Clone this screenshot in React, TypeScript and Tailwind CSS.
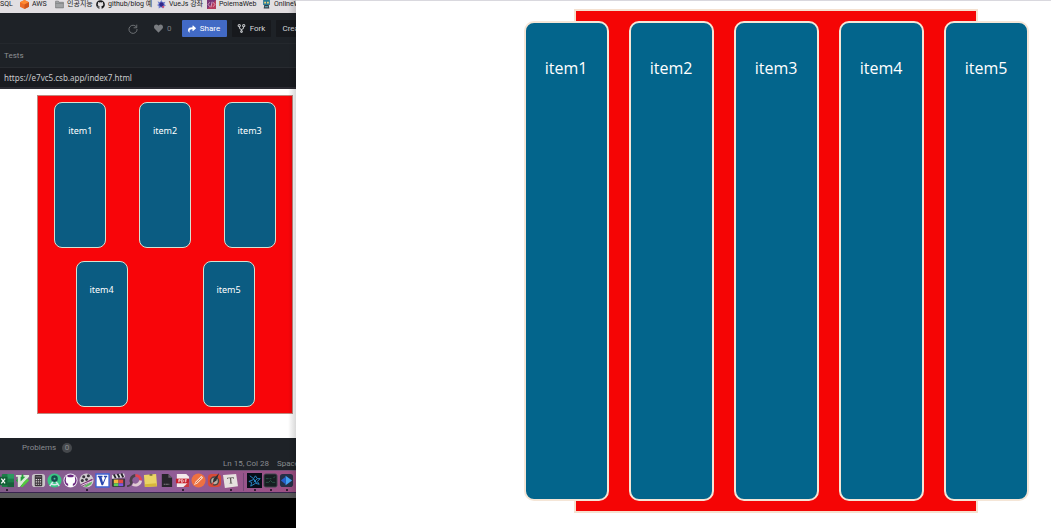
import React from 'react';
import { FaGithub, FaHeart, FaShare } from 'react-icons/fa';

type IconProps = { children: React.ReactNode };

const Icon = ({ children }: IconProps) => (
  <svg viewBox="0 0 16 16" className="size-[15px] shrink-0" aria-hidden="true">
    {children}
  </svg>
);

const Cube = () => (
  <svg viewBox="0 0 16 16" className="size-[9px]">
    <path d="M8 0l8 4v8l-8 4-8-4V4z" fill="#ed6d27" />
    <path d="M8 0l8 4-8 4-8-4z" fill="#ff8a32" />
    <path d="M8 8v8l8-4V4z" fill="#cf551b" />
  </svg>
);

const Folder = () => (
  <svg viewBox="0 0 16 16" className="size-[9px]">
    <path d="M1 3V2h5l1 2h8v10H1z" fill="#a1a3a5" stroke="#68696b" />
    <path d="M1 6h14" stroke="#737577" />
  </svg>
);

const Splash = () => (
  <svg viewBox="0 0 16 16" className="size-[9px]">
    <path d="M1 2l4 2 3-4 2 4 5-1-2 4 3 3-4 1-1 4-4-2-4 2V11L0 9l3-2z" fill="#7181ce" />
    <circle cx="8" cy="8" r="4" fill="#30288a" />
    <circle cx="11" cy="12" r="2" fill="#d04d73" />
  </svg>
);

const CodeTile = () => (
  <svg viewBox="0 0 16 16" className="size-[9px]">
    <path d="M0 0h16v16H0z" fill="#783678" />
    <path d="M0 16L16 0v16z" fill="#b63d5e" />
    <path d="M5 4L2 8l3 4M11 4l3 4-3 4M9 3l-2 10" fill="none" stroke="#e9b5cf" strokeWidth="1.4" />
  </svg>
);

const Robot = () => (
  <svg viewBox="0 0 16 16" className="size-[9px]">
    <path d="M2 0h12v9H2z" fill="#287a96" />
    <path d="M4 3h3v3H4zM9 3h3v3H9z" fill="#f5d778" />
    <path d="M4 9h8l1 6H3z" fill="#373d48" />
    <path d="M5 11h6v2H5z" fill="#62b5c3" />
  </svg>
);

const ForkIcon = () => (
  <svg viewBox="0 0 16 16" className="size-[9px]" fill="none" stroke="#c9cbce" strokeWidth="1.800">
    <path d="M4 5q0 4 4 5 4-1 4-5M8 10v2" />
    <circle cx="4" cy="3" r="2" />
    <circle cx="12" cy="3" r="2" />
    <circle cx="8" cy="13.500" r="1.500" />
  </svg>
);

const bookmarks = [
  { label: 'AWS', width: 'w-[35px]', icon: <Cube /> },
  { label: '인공지능', width: 'w-[41px]', icon: <Folder /> },
  { label: 'github/blog 예', width: 'w-[61px]', icon: <FaGithub className="size-[9px]" /> },
  { label: 'VueJs 강좌', width: 'w-[50px]', icon: <Splash /> },
  { label: 'PoiemaWeb', width: 'w-[55px]', icon: <CodeTile /> },
  { label: 'OnlineWeb', width: 'w-[55px]', icon: <Robot /> },
];

const dockApps = [
  {
    name: 'Spreadsheet',
    running: true,
    art: (
      <>
        <rect x="3" y="1" width="13" height="14" rx="1" fill="#1c7d48" />
        <path d="M9 1h7v5H9z" fill="#2d9a60" />
        <path d="M9 10h7v5H9z" fill="#17603a" />
        <rect y="4" width="9" height="9" fill="#126137" />
        <path d="M2.500 6l4 5M6.500 6l-4 5" stroke="#fff" strokeWidth="1.300" />
      </>
    ),
  },
  {
    name: 'Vim',
    art: (
      <>
        <path d="M8 1l7 7-7 7-7-7z" fill="#249c3c" />
        <path d="M1 2h6v2H6v5l5-5H9V2h6v2L5 15H3V4H1z" fill="#d9e8d5" />
        <path d="M9 10l4-4 2 2-7 7H6z" fill="#56c93f" />
      </>
    ),
  },
  {
    name: 'Calculator',
    art: (
      <>
        <rect x="1" y="1" width="14" height="14" rx="3" fill="#c9c4c8" />
        <rect x="4" y="2" width="8" height="12" rx="1" fill="#3a3338" />
        <path d="M5 4h6" stroke="#6e676c" strokeWidth="1.500" />
        <path d="M5 7h6M5 9.500h6M5 12h6" stroke="#d6cfd2" strokeWidth="1.300" strokeDasharray="1.400 0.800" />
      </>
    ),
  },
  {
    name: 'Android tools',
    art: (
      <>
        <circle cx="8" cy="8" r="7.500" fill="#39c783" />
        <path d="M8 7l-5 7M8 7l5 7M4 11q4 3 8 0" fill="none" stroke="#d8e9ec" strokeWidth="1.500" />
        <circle cx="8" cy="6" r="3.500" fill="#164e4c" />
        <circle cx="8" cy="6" r="1" fill="#5abfa6" />
      </>
    ),
  },
  {
    name: 'GitHub',
    art: (
      <>
        <circle cx="8" cy="8" r="7.500" fill="#efe6f2" />
        <circle cx="8" cy="8" r="6.500" fill="#6b2780" />
        <path d="M3.500 3l2.500 1.500h4L12.500 3l.5 5q0 3-2.500 3.500V15h-5v-3.500Q3 11 3 8z" fill="#fff" />
      </>
    ),
  },
  {
    name: 'Media viewer',
    running: true,
    art: (
      <>
        <circle cx="8" cy="8" r="7.500" fill="#d0cbd0" />
        <circle cx="5" cy="4" r="1.600" fill="#37343c" />
        <circle cx="10" cy="3" r="1.600" fill="#37343c" />
        <circle cx="3.500" cy="8" r="1.600" fill="#37343c" />
        <circle cx="8" cy="7" r="1.500" fill="#37343c" />
        <path d="M2 12l12-6 1 2L4 14z" fill="#7c3077" />
        <path d="M5 14l9-5-1 3-5 3z" fill="#5eb55e" />
        <path d="M3 13l12-5" stroke="#f1e6f0" />
      </>
    ),
  },
  {
    name: 'Vector editor',
    art: (
      <>
        <path d="M1 1h14v14H1z" fill="#fff" stroke="#3d62d3" strokeWidth="1.500" />
        <path d="M3 3h5v1.500H7L8.500 10 11 4.500H9.500V3H13v1.500h-1L8.500 13H7L4 4.500H3z" fill="#2846ad" />
      </>
    ),
  },
  {
    name: 'Video editor',
    art: (
      <>
        <path d="M1 6h14v7q0 2-2 2H3q-2 0-2-2z" fill="#35383f" />
        <path d="M1 2l13-1.500 1 4L1 6z" fill="#e2dfe3" />
        <path d="M3 1.500l2 4M7 1l2 4M11 .5l2 4" stroke="#242329" strokeWidth="2" />
        <path d="M3 7h5v4H3z" fill="#f4b83f" />
        <path d="M8 7h5v4H8z" fill="#df4a48" />
        <path d="M3 11h5v3H3z" fill="#5dd056" />
        <path d="M8 11h5v3H8z" fill="#7f54e0" />
      </>
    ),
  },
  {
    name: 'Disk cleaner',
    art: (
      <>
        <path d="M5 11A5.500 5.500 0 0 1 9 2.500" fill="none" stroke="#4b4149" strokeWidth="3" />
        <path d="M9 2.500a5.500 5.500 0 0 1 5.500 5.500" fill="none" stroke="#e44550" strokeWidth="3" />
        <path d="M14.500 8A5.500 5.500 0 0 1 6 12" fill="none" stroke="#e1cbd4" strokeWidth="3" />
        <path d="M0 14q4 0 5-4" fill="none" stroke="#4b4149" strokeWidth="2" />
      </>
    ),
  },
  {
    name: 'Notes',
    art: (
      <>
        <path d="M1 2l13-1 1 13-13 1z" fill="#ead465" />
        <path d="M2 12l12-1 1 3-13 1z" fill="#d6b73b" />
        <path d="M7 1h3v2H7z" fill="#7a7044" />
      </>
    ),
  },
  {
    name: 'Document',
    art: (
      <>
        <path d="M3 1h7l4 4v10H3z" fill="#27262b" />
        <path d="M10 1v4h4z" fill="#67606a" />
        <path d="M5 12h6" stroke="#88838a" strokeDasharray="2 .5" />
      </>
    ),
  },
  {
    name: 'Document reader',
    running: true,
    art: (
      <>
        <path d="M2 1h10l3 3v11H2z" fill="#f3e9ea" />
        <path d="M1 6h14v5H1z" fill="#c61e2c" />
        <path d="M4 10V7h1.500v1.500H4M7 10V7q2 0 2 1.500T7 10M11 10V7h1.500M11 8.500h1.500" fill="none" stroke="#fff" strokeWidth=".7" />
        <path d="M9 15l6-6v6z" fill="#cb3740" />
      </>
    ),
  },
  {
    name: 'API client',
    art: (
      <>
        <circle cx="8" cy="8" r="7.500" fill="#ee7141" />
        <path d="M3 13l2-4 6-6 2 2-6 6z" fill="#f9d8c7" />
        <path d="M5 11l6-6" fill="none" stroke="#d8673b" />
      </>
    ),
  },
  {
    name: 'Compass',
    art: (
      <>
        <rect x="1" y="1" width="14" height="14" rx="4" fill="#d84a36" />
        <circle cx="8" cy="8.500" r="5" fill="#4a4545" />
        <circle cx="8" cy="8.500" r="3.500" fill="#b9b0a4" />
        <path d="M6 11l1-5 6-6-3 8z" fill="#2e2e32" />
        <path d="M4 12l4-3-2 4z" fill="#d94136" />
      </>
    ),
  },
  {
    name: 'Text editor',
    running: true,
    art: (
      <>
        <path d="M0 2l14-1 2 13-14 2z" fill="#e6e1df" />
        <path d="M4.500 5l7-.5.2 1.500h-.8l-.2-.6-2 .1.400 5 .8.200v.5H7v-.5l.8-.2-.4-5-2 .2-.1.800h-.8z" fill="#57534f" />
      </>
    ),
  },
  {
    name: 'Network map',
    running: true,
    divided: true,
    art: (
      <>
        <path d="M0 0h16v16H0z" fill="#070d18" />
        <path d="M3 3l4 3 2-3 2 3h3l-3 3 2 3-4-1-5 3 1-4-3-1 5-2 3 3M7 6l3 5M11 6l-4 4" fill="none" stroke="#2a89c7" />
      </>
    ),
  },
  {
    name: 'System monitor',
    running: true,
    art: (
      <>
        <rect x="1" y="1" width="14" height="14" rx="2" fill="#161e21" stroke="#4a4d55" />
        <path d="M3 6h3M7 6h2M11 5l2-1M3 10h3l2-2 2 2h3" fill="none" stroke="#2b5546" />
      </>
    ),
  },
  {
    name: 'Player',
    running: true,
    art: (
      <>
        <rect x="1" y="1" width="14" height="14" rx="3" fill="#263047" />
        <path d="M7 3l7 5-7 5z" fill="#43a0f4" />
        <path d="M7 4v8L2 8z" fill="#2560d0" />
      </>
    ),
  },
];

const SmallItem = ({ label }: { label: string }) => (
  <div className="h-[146px] w-[52px] rounded-[8px] border border-[#d8e0d0] bg-[#0b5c82] pt-[21px] text-center text-[9px] leading-[14px] text-white">
    {label}
  </div>
);

function EditorWindow() {
  return (
    <section className="relative flex w-[296px] shrink-0 flex-col overflow-hidden bg-black font-['Roboto','Noto_Sans_CJK_KR',sans-serif]">
      <nav className="flex h-[13px] items-start overflow-hidden bg-[#e2dfe2] text-[7px] leading-[9px] whitespace-nowrap text-[#19191b]">
        <a href="#sql" className="w-5 shrink-0">SQL</a>
        {bookmarks.map((b) => (
          <a key={b.label} href="#bookmark" className={`flex shrink-0 items-center gap-[3px] ${b.width}`}>
            <span className="shrink-0">{b.icon}</span>
            {b.label}
          </a>
        ))}
      </nav>

      <header className="flex h-[31px] items-center border-b border-[#24282d] bg-[#1e2227] pt-px pl-[128px] text-[8px] whitespace-nowrap text-[#d5d7da]">
        <button aria-label="Refresh" className="mr-4 shrink-0">
          <svg viewBox="0 0 16 16" className="size-[10px]" fill="none" stroke="#777a7e" strokeWidth="1.4">
            <path d="M13.500 5A6.500 6.500 0 1 0 14.500 8M14 1v5H9" />
          </svg>
        </button>
        <button className="mr-[10px] flex shrink-0 items-center gap-1 text-[#797c80]">
          <FaHeart className="size-[9px]" />0
        </button>
        <button className="mr-[5px] flex h-[17px] w-[45px] shrink-0 items-center justify-center gap-1 rounded-[1px] bg-[#426ac5] text-white">
          <FaShare className="size-[8px]" />Share
        </button>
        <button className="mr-[5px] flex h-[17px] w-[39px] shrink-0 items-center justify-center gap-1 rounded-[1px] bg-[#17191d]">
          <ForkIcon />Fork
        </button>
        <button className="h-[17px] w-[45px] shrink-0 rounded-[1px] bg-[#17191d] pl-[7px] text-left">Create</button>
      </header>

      <div className="h-[24px] border-b border-[#282b30] bg-[#1e2227] pl-1 text-[8px] leading-[23px] text-[#8e9194]">Tests</div>
      <div className="h-[21px] border-b-2 border-[#2b2b32] bg-[#191b20] px-1">
        <input
          aria-label="Address"
          defaultValue="https://e7vc5.csb.app/index7.html"
          className="block h-[19px] w-full bg-transparent font-['Noto_Sans',sans-serif] text-[8px] text-[#c8cacc] outline-none"
        />
      </div>

      <div className="bg-white pt-[6px] pr-[3px] pb-6 pl-[37px] font-['Noto_Sans',sans-serif]">
        <div className="flex flex-col gap-[13px] border border-[#bd8980] bg-[#f80509] py-[6px]">
          <div className="flex justify-around">
            <SmallItem label="item1" />
            <SmallItem label="item2" />
            <SmallItem label="item3" />
          </div>
          <div className="flex justify-around">
            <SmallItem label="item4" />
            <SmallItem label="item5" />
          </div>
        </div>
      </div>

      <footer className="flex h-8 flex-col justify-between bg-[#1e2227] pt-[5px] pb-px text-[8px] leading-[10px] whitespace-nowrap text-[#898c90]">
        <div className="flex items-center gap-[6px] pl-[22px]">
          Problems
          <span className="size-[10px] rounded-full bg-[#45484c] text-center">0</span>
        </div>
        <div className="flex gap-2 pl-[223px]">
          <span>Ln 15, Col 28</span>
          <span>Spaces: 2</span>
        </div>
      </footer>

      <div className="flex h-[22px] items-start overflow-hidden border-t border-[#765279] bg-linear-to-r from-[#815b88] via-[#8e5f9a] to-[#9d4f83] pt-[2px]">
        {dockApps.map((app, i) => (
          <div
            key={app.name}
            className={`flex shrink-0 flex-col items-center gap-px ${i === 0 ? '-ml-px' : app.divided ? 'ml-[5px] border-l border-[#754777] pl-[3px]' : 'ml-px'}`}
          >
            <Icon>{app.art}</Icon>
            {app.running && <span className="size-[2px] rounded-full bg-[#160b19]" />}
          </div>
        ))}
      </div>
      <div className="h-[6px] border-t border-[#39254f] bg-[#5a5a5b]" />

      <div className="pointer-events-none absolute inset-y-0 right-0 w-2 bg-linear-to-r from-black/0 to-black/15" />
    </section>
  );
}

const items = ['item1', 'item2', 'item3', 'item4', 'item5'];

export default function App() {
  return (
    <div className="flex min-h-screen bg-white">
      <EditorWindow />
      <main className="flex flex-1 items-start justify-center border-t border-[#d9d8de] pt-2 pl-[205px] font-['Open_Sans','Noto_Sans',sans-serif]">
        <div className="flex w-[404px] justify-center gap-5 border-2 border-[#f5e1d0] bg-[#f50505] py-[10px]">
          {items.map((label) => (
            <div
              key={label}
              className="h-[480px] w-[85px] shrink-0 rounded-[10px] border-2 border-[#f5e6d7] bg-[#03658c] pt-[34px] text-center text-[16px] leading-[22px] text-white"
            >
              {label}
            </div>
          ))}
        </div>
      </main>
    </div>
  );
}
